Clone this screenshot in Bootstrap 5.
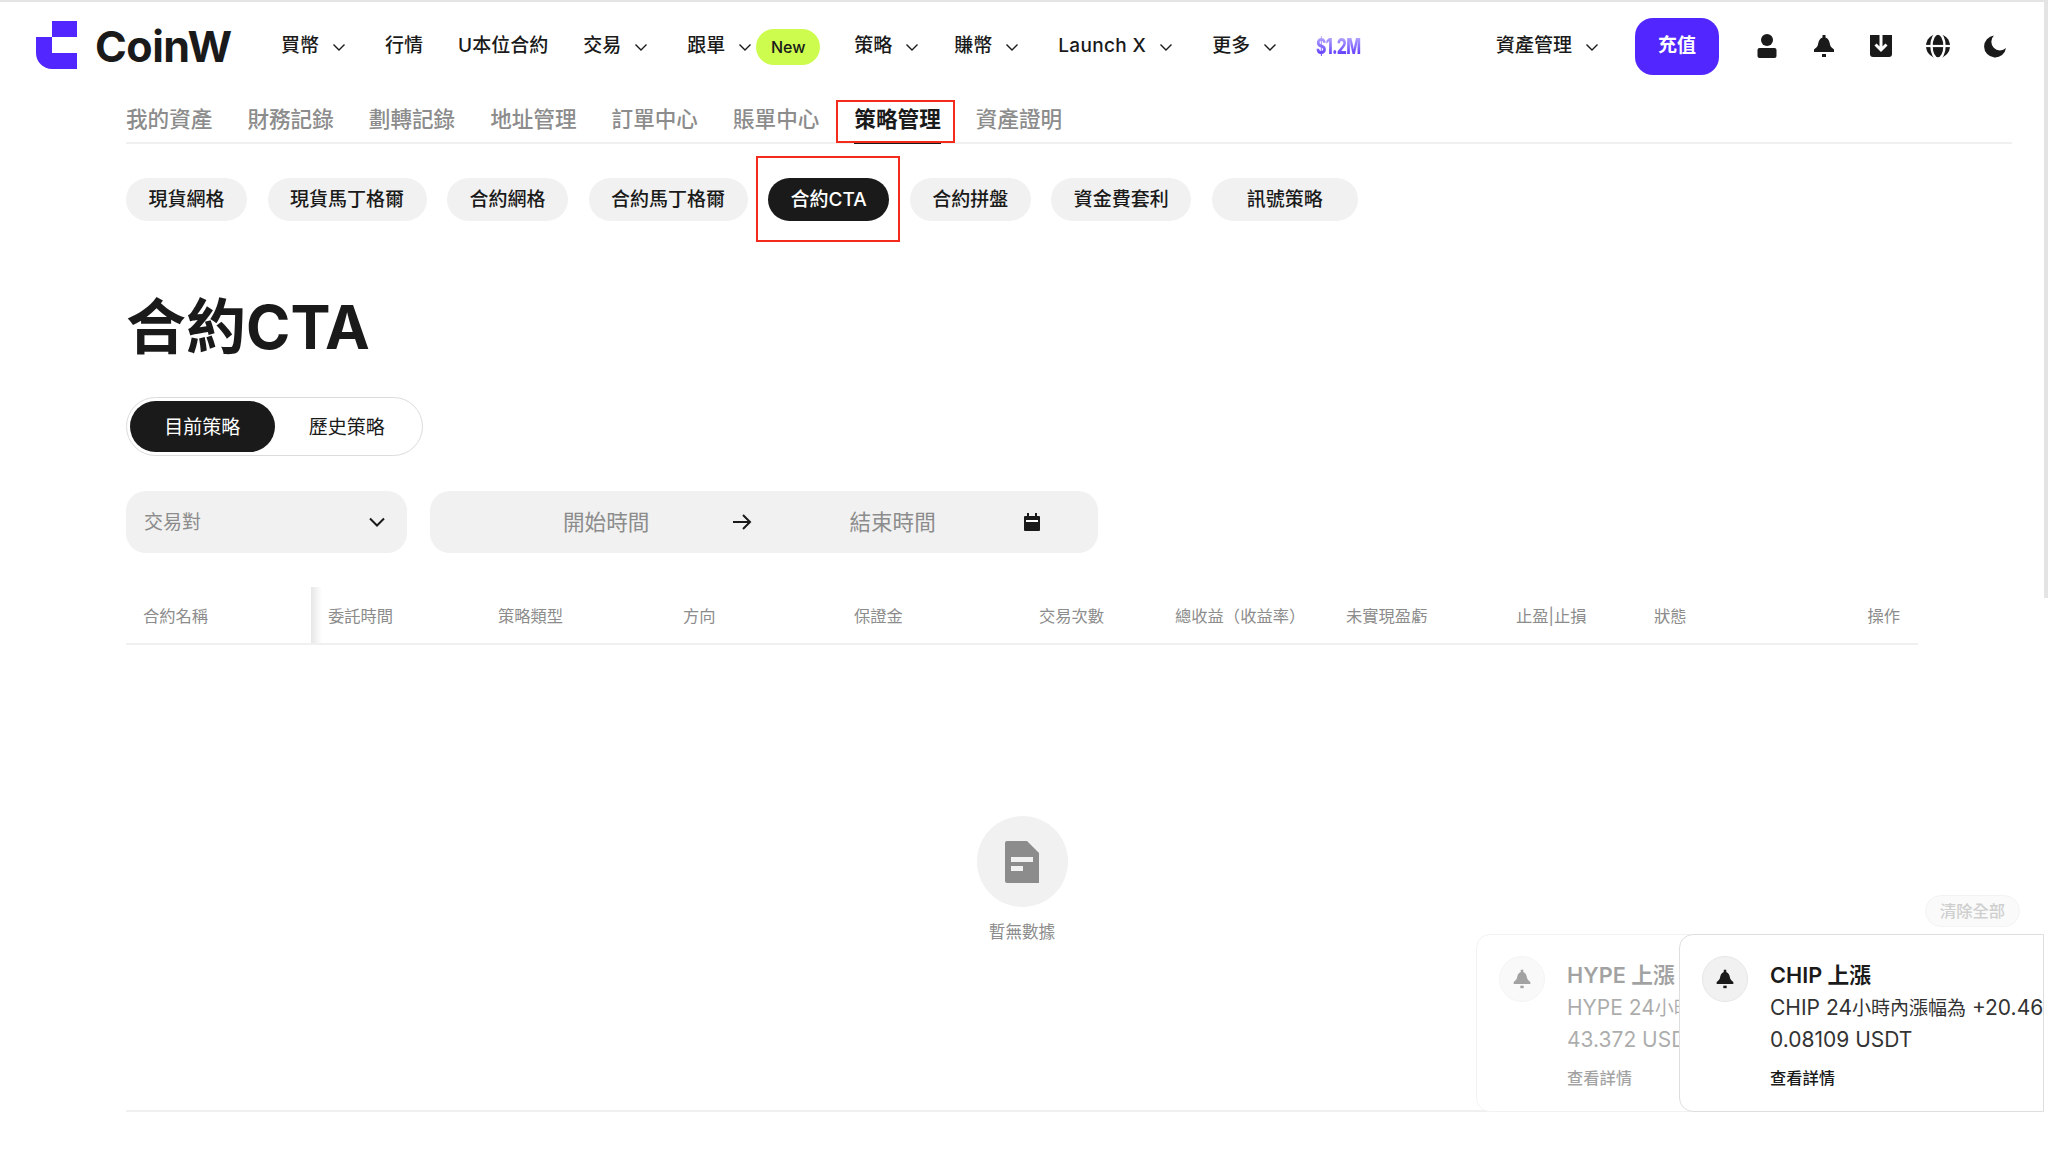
<!DOCTYPE html>
<html lang="zh-Hant">
<head>
<meta charset="utf-8">
<title>CoinW 合約CTA</title>
<link href="https://cdn.jsdelivr.net/npm/bootstrap@5.3.0/dist/css/bootstrap.min.css" rel="stylesheet">
<style>
:root{--ink:#1a1a1a;--mute:#8c8c8c;--soft:#f1f1f1;--brand:#5227ff;}
html,body{height:1166px;overflow:hidden;}
body{font-family:"Inter","Noto Sans CJK TC","Noto Sans",sans-serif;color:var(--ink);background:#fff;border-top:2px solid #e4e4e4;}
.scroll-thumb{position:fixed;right:0;top:0;width:4px;height:598px;background:#e4e4e4;z-index:5;}
.site-head{height:88px;padding:0 41px 0 36px;font-size:19px;font-weight:500;}
.logo-mark{margin-top:-2px;}
.logo-text{font-size:43px;font-weight:700;letter-spacing:-.5px;line-height:1;margin-left:18px;}
.menu-row{gap:35px;margin-left:49.5px;}
.menu-item{white-space:nowrap;padding-top:1px;}
.chev{width:16px;height:16px;margin:0 3px 0 12px;flex:none;}
.menu-tight{margin-right:-4px;}
.latin-wide{letter-spacing:.35px;}
.new-tag{background:#cdfb4e;border-radius:18px;font-size:16px;width:64px;height:36px;margin-left:0;margin-right:-1px;}
.promo{font-size:22px;font-weight:800;letter-spacing:-1px;transform:scaleX(.72);transform-origin:left center;background:linear-gradient(#c2baff,#5227ff);-webkit-background-clip:text;background-clip:text;color:transparent;line-height:24px;}
.pay-btn{background:var(--brand);color:#fff;width:84px;height:57px;border-radius:18px;font-size:19px;font-weight:600;border:0;margin:0 36px 0 32px;}
.pay-btn:hover{background:var(--brand);color:#fff;}
.tool-row{gap:33px;}
.tool-row svg{width:24px;height:24px;display:block;}
.page-wrap{padding:0 36px 0 126px;}
.tab-row{gap:35px;height:54px;border-bottom:2px solid #f0f0f0;font-size:21.6px;font-weight:500;color:var(--mute);}
.tab-one{height:54px;line-height:58px;position:relative;white-space:nowrap;}
.tab-on{color:var(--ink);font-weight:600;border-bottom:3px solid var(--ink);}
.tab-on::after{content:"";position:absolute;left:-18px;right:-14px;top:10px;height:43px;border:2px solid #f42a1c;}
.pill-row{gap:20.5px;margin-top:34px;}
.pill-one{height:43px;padding:2px 22.5px 0;background:var(--soft);border-radius:22px;font-size:19px;font-weight:500;position:relative;white-space:nowrap;}
.pill-wide{padding:2px 35px 0;}
.pill-on{background:var(--ink);color:#fff;}
.pill-on::after{content:"";position:absolute;left:-12px;right:-11px;top:-22px;bottom:-21px;border:2px solid #f42a1c;}
.page-title{font-size:60px;font-weight:700;line-height:72px;margin:70px 0 0;}
.seg-box{width:297px;height:59px;border:1.5px solid #dcdcdc;border-radius:30px;padding:3px;margin-top:34px;font-size:19px;}
.seg-one{height:51px;width:145px;border-radius:26px;padding-top:3px;}
.seg-on{background:var(--ink);color:#fff;}
.filter-row{gap:23px;margin-top:35px;}
.filter-pick{width:281px;height:62px;background:var(--soft);border-radius:20px;padding:0 20px 0 18px;font-size:19px;color:var(--mute);}
.pick-label{padding-top:3px;}
.filter-date{width:668px;height:62px;background:var(--soft);border-radius:20px;font-size:21.6px;color:var(--mute);}
.date-a{margin-left:133px;}
.date-arrow{margin:0 96px 0 82px;width:22px;height:22px;}
.date-cal{margin-left:86px;width:20px;height:20px;}
.grid-head{width:1792px;margin:34px 0 0;table-layout:fixed;font-size:16.3px;color:var(--mute);}
.grid-head th{font-weight:400;height:57px;padding:2px 0 0 17px;border-bottom:2px solid #f0f0f0;white-space:nowrap;position:relative;vertical-align:middle;}
.grid-head th.fix-col::after{content:"";position:absolute;right:-11px;top:0;bottom:0;width:11px;background:linear-gradient(90deg,#e6e6e6,#fff);}
.act-label{margin-right:18px;}
.void-area{height:467px;border-bottom:2px solid #f0f0f0;padding:171px 94px 0 0;}
.void-disc{width:91px;height:91px;border-radius:50%;background:var(--soft);}
.void-text{font-size:16.6px;color:var(--mute);margin-top:13px;}
.clear-all{position:fixed;left:1925px;top:895px;width:95px;height:32px;border-radius:16px;background:#fafafa;border:1px solid #f3f3f3;font-size:16.3px;color:#cfcfcf;font-weight:500;}
.note-card{position:fixed;top:934px;height:178px;background:#fff;border:1.5px solid #dedede;border-radius:14px 0 0 14px;padding:21px 0 0 22px;overflow:hidden;white-space:nowrap;}
.note-back{left:1476px;width:220px;border-color:#f2f2f2;}
.note-back .note-in{opacity:.4;}
.note-front{left:1679px;width:365px;z-index:2;}
.bell-disc{width:46px;height:46px;border-radius:50%;background:var(--soft);border:1px solid #e6e6e6;flex:none;margin-right:22px;}
.bell-disc svg{width:20px;height:26px;}
.note-title{font-size:21.7px;font-weight:600;line-height:28px;margin-top:5px;}
.note-body{font-size:21px;line-height:31px;margin-top:3px;color:#333;}
.cjk-fit{font-size:19px;}
.note-link{font-size:16.3px;margin-top:11px;font-weight:500;}
</style>
</head>
<body>
<div class="scroll-thumb"></div>
<header class="site-head d-flex align-items-center">
  <svg class="logo-mark" width="41" height="48" viewBox="0 0 41 48" aria-label="CoinW">
    <path fill="#5227ff" d="M16 0h25v16H16zM0 16h16v16h25v16H16A16 16 0 0 1 0 32z"/>
  </svg>
  <span class="logo-text">CoinW</span>
  <div class="menu-row d-flex align-items-center">
    <div class="menu-item d-flex align-items-center">買幣<svg class="chev" viewBox="0 0 16 16"><path d="M2.500 5.500 8 11l5.500-5.500" fill="none" stroke="#1a1a1a" stroke-width="1.400"/></svg></div>
    <div class="menu-item">行情</div>
    <div class="menu-item">U本位合約</div>
    <div class="menu-item d-flex align-items-center">交易<svg class="chev" viewBox="0 0 16 16"><path d="M2.500 5.500 8 11l5.500-5.500" fill="none" stroke="#1a1a1a" stroke-width="1.400"/></svg></div>
    <div class="menu-item d-flex align-items-center">跟單<svg class="chev" viewBox="0 0 16 16"><path d="M2.500 5.500 8 11l5.500-5.500" fill="none" stroke="#1a1a1a" stroke-width="1.400"/></svg><span class="new-tag d-flex align-items-center justify-content-center">New</span></div>
    <div class="menu-item menu-tight d-flex align-items-center">策略<svg class="chev" viewBox="0 0 16 16"><path d="M2.500 5.500 8 11l5.500-5.500" fill="none" stroke="#1a1a1a" stroke-width="1.400"/></svg></div>
    <div class="menu-item d-flex align-items-center">賺幣<svg class="chev" viewBox="0 0 16 16"><path d="M2.500 5.500 8 11l5.500-5.500" fill="none" stroke="#1a1a1a" stroke-width="1.400"/></svg></div>
    <div class="menu-item latin-wide d-flex align-items-center">Launch X<svg class="chev" viewBox="0 0 16 16"><path d="M2.500 5.500 8 11l5.500-5.500" fill="none" stroke="#1a1a1a" stroke-width="1.400"/></svg></div>
    <div class="menu-item d-flex align-items-center">更多<svg class="chev" viewBox="0 0 16 16"><path d="M2.500 5.500 8 11l5.500-5.500" fill="none" stroke="#1a1a1a" stroke-width="1.400"/></svg></div>
    <div class="promo">$1.2M</div>
  </div>
  <div class="ms-auto d-flex align-items-center">
    <div class="menu-item d-flex align-items-center">資產管理<svg class="chev" viewBox="0 0 16 16"><path d="M2.500 5.500 8 11l5.500-5.500" fill="none" stroke="#1a1a1a" stroke-width="1.400"/></svg></div>
    <button type="button" class="btn pay-btn d-flex align-items-center justify-content-center">充值</button>
    <div class="tool-row d-flex align-items-center">
      <svg viewBox="0 0 24 24"><circle cx="12" cy="6" r="6" fill="#1a1a1a"/><rect x="2.500" y="14" width="19" height="10" rx="2" fill="#1a1a1a"/></svg>
      <svg viewBox="0 0 24 24"><path fill="#1a1a1a" d="M10.500 1h3v2.500c3 1 4 4 4.500 7 .3 2 2 3.500 4 5v2.500H2v-2.500c2-1.500 3.700-3 4-5 .5-3 1.500-6 4.500-7z"/><rect x="10" y="20" width="4" height="3" fill="#1a1a1a"/></svg>
      <svg viewBox="0 0 24 24"><path fill="#1a1a1a" d="M1 1h22v19a3 3 0 0 1-3 3H4a3 3 0 0 1-3-3z"/><path d="M12 1v15M6.500 10.500 12 16l5.500-5.500" fill="none" stroke="#fff" stroke-width="3"/></svg>
      <svg viewBox="0 0 24 24"><circle cx="12" cy="12" r="12" fill="#1a1a1a"/><ellipse cx="12" cy="12" rx="6.500" ry="12.500" fill="none" stroke="#fff" stroke-width="2.400"/><path d="M0 12h24" stroke="#fff" stroke-width="2.200"/></svg>
      <svg viewBox="0 0 24 24"><path fill="#1a1a1a" d="M11 1.500A11 11 0 1 0 23 14 8.500 8.500 0 0 1 11 1.500z"/></svg>
    </div>
  </div>
</header>

<main class="page-wrap">
  <div class="tab-row d-flex">
    <div class="tab-one">我的資產</div>
    <div class="tab-one">財務記錄</div>
    <div class="tab-one">劃轉記錄</div>
    <div class="tab-one">地址管理</div>
    <div class="tab-one">訂單中心</div>
    <div class="tab-one">賬單中心</div>
    <div class="tab-one tab-on">策略管理</div>
    <div class="tab-one">資產證明</div>
  </div>
  <div class="pill-row d-flex">
    <div class="pill-one d-flex align-items-center">現貨網格</div>
    <div class="pill-one d-flex align-items-center">現貨馬丁格爾</div>
    <div class="pill-one d-flex align-items-center">合約網格</div>
    <div class="pill-one d-flex align-items-center">合約馬丁格爾</div>
    <div class="pill-one pill-on d-flex align-items-center">合約CTA</div>
    <div class="pill-one d-flex align-items-center">合約拼盤</div>
    <div class="pill-one d-flex align-items-center">資金費套利</div>
    <div class="pill-one pill-wide d-flex align-items-center">訊號策略</div>
  </div>
  <h1 class="page-title">合約CTA</h1>
  <div class="seg-box d-flex align-items-center">
    <div class="seg-one seg-on d-flex align-items-center justify-content-center">目前策略</div>
    <div class="seg-one d-flex align-items-center justify-content-center">歷史策略</div>
  </div>
  <div class="filter-row d-flex">
    <div class="filter-pick d-flex align-items-center justify-content-between"><span class="pick-label">交易對</span>
      <svg width="20" height="20" viewBox="0 0 20 20"><path d="M3 6.500 10 13.500l7-7" fill="none" stroke="#1a1a1a" stroke-width="2"/></svg>
    </div>
    <div class="filter-date d-flex align-items-center">
      <span class="date-a">開始時間</span>
      <svg class="date-arrow" viewBox="0 0 22 22"><path d="M2 11h17M12 4l7 7-7 7" fill="none" stroke="#1a1a1a" stroke-width="2"/></svg>
      <span>結束時間</span>
      <svg class="date-cal" viewBox="0 0 20 20"><path fill="#1a1a1a" d="M5 1h2v3h6V1h2v3h2a1 1 0 0 1 1 1v13a1 1 0 0 1-1 1H3a1 1 0 0 1-1-1V5a1 1 0 0 1 1-1h2z"/><rect x="4" y="8" width="12" height="2" fill="#fff"/></svg>
    </div>
  </div>
  <table class="grid-head">
    <colgroup>
      <col width="185"><col width="170"><col width="185"><col width="171"><col width="185"><col width="136"><col width="171"><col width="170"><col width="138"><col width="281">
    </colgroup>
    <thead>
      <tr>
        <th class="fix-col">合約名稱</th><th>委託時間</th><th>策略類型</th><th>方向</th><th>保證金</th><th>交易次數</th><th>總收益（收益率）</th><th>未實現盈虧</th><th>止盈|止損</th><th>狀態<span class="float-end act-label">操作</span></th>
      </tr>
    </thead>
  </table>
  <section class="void-area d-flex flex-column align-items-center">
    <div class="void-disc d-flex align-items-center justify-content-center">
      <svg width="34" height="42" viewBox="0 0 34 42"><path fill="#8c8c8c" d="M2 0h20l12 12v30H2a2 2 0 0 1-2-2V2a2 2 0 0 1 2-2z"/><rect x="6" y="16" width="22" height="5" fill="#f1f1f1"/><rect x="6" y="25" width="12" height="5" fill="#f1f1f1"/></svg>
    </div>
    <div class="void-text">暫無數據</div>
  </section>
</main>

<div class="clear-all d-flex align-items-center justify-content-center">清除全部</div>
<div class="note-card note-back">
  <div class="note-in d-flex">
    <div class="bell-disc d-flex align-items-center justify-content-center"><svg viewBox="0 0 24 24"><path fill="#1a1a1a" d="M10.500 1h3v2.500c3 1 4 4 4.500 7 .3 2 2 3.500 4 5v2.500H2v-2.500c2-1.500 3.700-3 4-5 .5-3 1.500-6 4.500-7z"/><rect x="10" y="20" width="4" height="3" fill="#1a1a1a"/></svg></div>
    <div>
      <div class="note-title">HYPE 上漲</div>
      <div class="note-body">HYPE 24<span class="cjk-fit">小時內</span><br>43.372 USDT</div>
      <div class="note-link">查看詳情</div>
    </div>
  </div>
</div>
<div class="note-card note-front">
  <div class="d-flex">
    <div class="bell-disc d-flex align-items-center justify-content-center"><svg viewBox="0 0 24 24"><path fill="#1a1a1a" d="M10.500 1h3v2.500c3 1 4 4 4.500 7 .3 2 2 3.500 4 5v2.500H2v-2.500c2-1.500 3.700-3 4-5 .5-3 1.500-6 4.500-7z"/><rect x="10" y="20" width="4" height="3" fill="#1a1a1a"/></svg></div>
    <div>
      <div class="note-title">CHIP 上漲</div>
      <div class="note-body">CHIP 24<span class="cjk-fit">小時內漲幅為</span> +20.46<br>0.08109 USDT</div>
      <div class="note-link">查看詳情</div>
    </div>
  </div>
</div>
<script src="https://cdn.jsdelivr.net/npm/bootstrap@5.3.0/dist/js/bootstrap.bundle.min.js"></script>
</body>
</html>
